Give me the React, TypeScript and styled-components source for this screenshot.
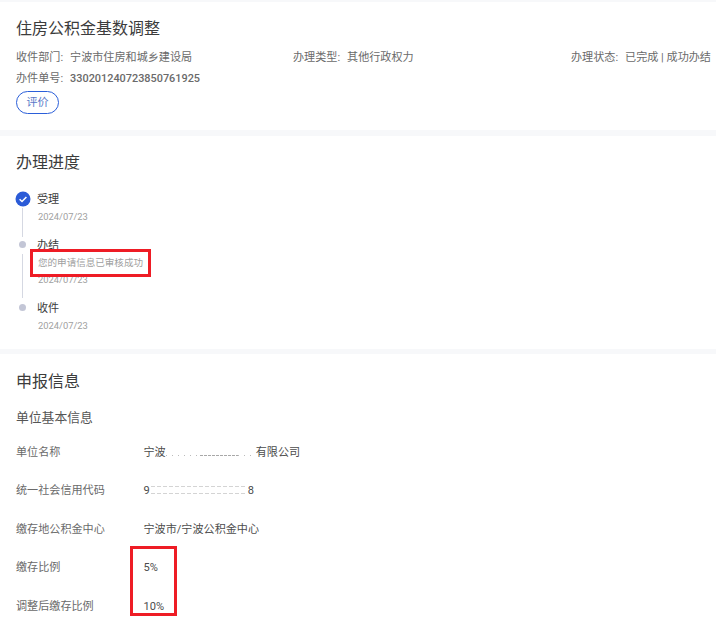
import React from 'react';
import styled, { createGlobalStyle } from 'styled-components';

const GlobalStyle = createGlobalStyle`
  html, body {
    margin: 0;
    padding: 0;
    background: #f7f8fa;
    font-family: Roboto, "Noto Sans CJK SC", sans-serif;
  }
`;

const Page = styled.div`
  position: relative;
  width: 716px;
  height: 618px;
  overflow: hidden;
  padding-top: 2px;
  box-sizing: border-box;
`;

const Card = styled.section<{ $height?: number; $gap?: number }>`
  background: #fff;
  padding: 0 16px;
  box-sizing: border-box;
  height: ${props => (props.$height ? `${props.$height}px` : 'auto')};
  margin-bottom: ${props => props.$gap ?? 0}px;
`;

const Title = styled.h2<{ $top: number }>`
  margin: 0;
  padding-top: ${props => props.$top}px;
  font-size: 16px;
  line-height: 22px;
  font-weight: 400;
  color: #3c3c3c;
`;

const MetaRow = styled.div`
  display: grid;
  grid-template-columns: 277px 278px auto;
  margin-top: 10px;
`;

const MetaItem = styled.div`
  font-size: 11.1px;
  line-height: 16px;
  color: #6a6a6a;
  white-space: nowrap;
`;

const MetaValue = styled.span`
  margin-left: 7px;
`;

const OrderNo = styled(MetaItem)`
  margin-top: 5px;
`;

const OrderValue = styled(MetaValue)`
  font-size: 10.9px;
  font-weight: 500;
`;

const RateButton = styled.button`
  display: block;
  width: 43px;
  height: 23px;
  margin-top: 4px;
  padding: 0;
  border: 1px solid #2b5fd9;
  border-radius: 12px;
  background: #fff;
  color: #5a78c8;
  font-family: inherit;
  font-size: 11.1px;
  line-height: 21px;
`;

const Steps = styled.ol`
  list-style: none;
  margin: 18px 0 0;
  padding: 0;
`;

const Step = styled.li<{ $height: number }>`
  position: relative;
  height: ${props => props.$height}px;
  padding-left: 21px;
`;

const StepLine = styled.span<{ $height: number }>`
  position: absolute;
  left: 6px;
  top: 16px;
  width: 1px;
  height: ${props => props.$height}px;
  background: #d5d8e2;
`;

const StepDot = styled.span`
  position: absolute;
  left: 3px;
  top: 3px;
  width: 7px;
  height: 7px;
  border-radius: 50%;
  background: #c3c6d6;
`;

const StepCheck = styled.svg`
  position: absolute;
  left: -1px;
  top: -1px;
  width: 16px;
  height: 16px;
`;

const StepName = styled.div`
  font-size: 11.1px;
  line-height: 16px;
  color: #3c3c3c;
`;

const StepNote = styled.div`
  margin: 2px 0 0 1px;
  font-size: 9.55px;
  line-height: 14px;
  color: #a0a0a0;
`;

const StepDate = styled.div<{ $top: number }>`
  margin: ${props => props.$top}px 0 0 1px;
  font-size: 9.4px;
  line-height: 14px;
  color: #a0a0a0;
`;

const SubTitle = styled.h3`
  margin: 16px 0 0;
  font-size: 12.8px;
  line-height: 18px;
  font-weight: 400;
  color: #555;
`;

const InfoList = styled.dl`
  margin: 17.7px 0 0;
`;

const InfoRow = styled.div`
  display: grid;
  grid-template-columns: 127.5px 1fr;
  height: 38.6px;
  align-items: start;
`;

const InfoLabel = styled.dt`
  font-size: 11.1px;
  line-height: 16px;
  color: #6a6a6a;
`;

const InfoValue = styled.dd`
  margin: 0;
  font-size: 11.1px;
  line-height: 16px;
  color: #4c4c4c;
`;

// the personal data in the reference is wiped out, only specks of the glyphs are left
const NameMask = styled.span`
  display: inline-block;
  width: 90px;
  height: 1px;
  background:
    repeating-linear-gradient(90deg, #a8a8a8 0 3px, transparent 3px 4px) 34px 0 / 38px 100% no-repeat,
    repeating-linear-gradient(90deg, #bbb 0 1px, transparent 1px 6px);
`;

const CodeMask = styled.span`
  display: inline-block;
  width: 96px;
  height: 8px;
  margin: 0 1px;
  background:
    repeating-linear-gradient(90deg, #d4d4d4 0 4px, transparent 4px 6px) 0 0 / 100% 1px no-repeat,
    repeating-linear-gradient(90deg, #d4d4d4 0 4px, transparent 4px 6px) 0 100% / 100% 1px no-repeat;
`;

const Highlight = styled.div<{ $x: number; $y: number; $w: number; $h: number }>`
  position: absolute;
  left: ${props => props.$x}px;
  top: ${props => props.$y}px;
  width: ${props => props.$w}px;
  height: ${props => props.$h}px;
  border: 3px solid #ee1c25;
  box-sizing: border-box;
  pointer-events: none;
`;

const CheckIcon = () => (
  <StepCheck viewBox="0 0 16 16">
    <circle cx="8" cy="8" r="7.5" fill="#2b5bd7" />
    <path d="M4.6 8.2l2.4 2.3 4.4-4.6" fill="none" stroke="#fff" strokeWidth="1.5" />
  </StepCheck>
);

const App: React.FC = () => (
  <Page>
    <GlobalStyle />
    <Card $height={128} $gap={6}>
      <Title $top={16}>住房公积金基数调整</Title>
      <MetaRow>
        <MetaItem>收件部门:<MetaValue>宁波市住房和城乡建设局</MetaValue></MetaItem>
        <MetaItem>办理类型:<MetaValue>其他行政权力</MetaValue></MetaItem>
        <MetaItem>办理状态:<MetaValue>已完成 | 成功办结</MetaValue></MetaItem>
      </MetaRow>
      <OrderNo>办件单号:<OrderValue>330201240723850761925</OrderValue></OrderNo>
      <RateButton>评价</RateButton>
    </Card>

    <Card $height={213} $gap={5}>
      <Title $top={16}>办理进度</Title>
      <Steps>
        <Step $height={46}>
          <CheckIcon />
          <StepLine $height={29} />
          <StepName>受理</StepName>
          <StepDate $top={2}>2024/07/23</StepDate>
        </Step>
        <Step $height={63}>
          <StepDot />
          <StepLine $height={44} />
          <StepName>办结</StepName>
          <StepNote>您的申请信息已审核成功</StepNote>
          <StepDate $top={3}>2024/07/23</StepDate>
        </Step>
        <Step $height={44}>
          <StepDot />
          <StepName>收件</StepName>
          <StepDate $top={2}>2024/07/23</StepDate>
        </Step>
      </Steps>
    </Card>

    <Card>
      <Title $top={17}>申报信息</Title>
      <SubTitle>单位基本信息</SubTitle>
      <InfoList>
        <InfoRow>
          <InfoLabel>单位名称</InfoLabel>
          <InfoValue>宁波<NameMask />有限公司</InfoValue>
        </InfoRow>
        <InfoRow>
          <InfoLabel>统一社会信用代码</InfoLabel>
          <InfoValue>9<CodeMask />8</InfoValue>
        </InfoRow>
        <InfoRow>
          <InfoLabel>缴存地公积金中心</InfoLabel>
          <InfoValue>宁波市/宁波公积金中心</InfoValue>
        </InfoRow>
        <InfoRow>
          <InfoLabel>缴存比例</InfoLabel>
          <InfoValue>5%</InfoValue>
        </InfoRow>
        <InfoRow>
          <InfoLabel>调整后缴存比例</InfoLabel>
          <InfoValue>10%</InfoValue>
        </InfoRow>
      </InfoList>
    </Card>

    <Highlight $x={30} $y={249} $w={121} $h={28} />
    <Highlight $x={130} $y={546} $w={47} $h={70} />
  </Page>
);

export default App;
